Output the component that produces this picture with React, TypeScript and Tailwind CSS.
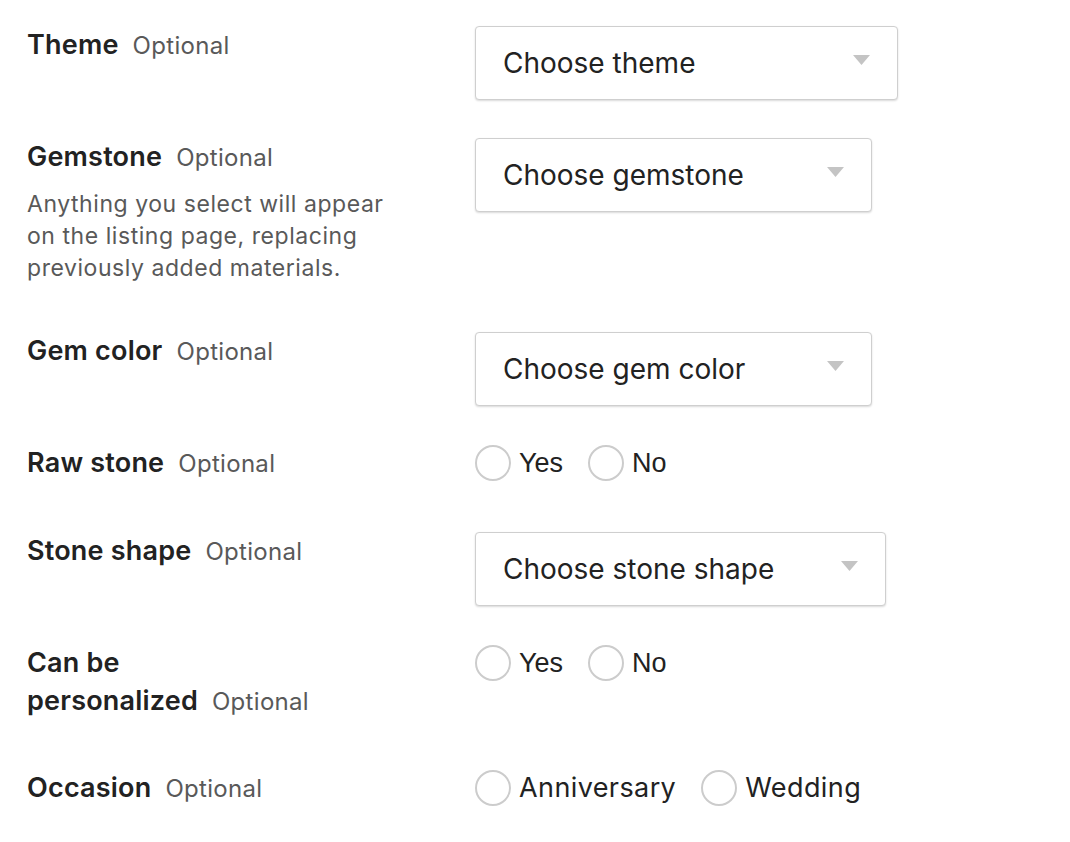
import React from "react"

function Label({ children }: { children: React.ReactNode }) {
  return (
    <div className="text-[27px] leading-[38px]">
      <span className="font-semibold tracking-[0.2px] text-[#222222]">{children}</span>
      <span className="ml-[14px] text-[24px] tracking-[0.3px] text-[#595959]">Optional</span>
    </div>
  )
}

function Select({ placeholder, width }: { placeholder: string; width: string }) {
  return (
    <div
      className={`${width} h-[74px] flex items-center justify-between pl-[27px] pr-[27px] border border-[#cfcfcf] rounded-[4px] bg-white shadow-[0_1px_2px_rgba(0,0,0,0.15)]`}
    >
      <span className="text-[28px] text-[#222222]">{placeholder}</span>
      <svg width="17" height="10" viewBox="0 0 17 10" className="-mt-[6px]">
        <path d="M0 0h17L8.5 10z" fill="#c4c4c4" />
      </svg>
    </div>
  )
}

function Radio({ label, arial }: { label: string; arial?: boolean }) {
  return (
    <label className="flex items-center gap-[8px]">
      <span className="w-[36px] h-[36px] rounded-full border-2 border-[#cccccc] bg-white" />
      <span
        className={`text-[27px] text-[#222222] ${arial ? "font-['Liberation_Sans',sans-serif]" : "tracking-[0.4px]"}`}
      >
        {label}
      </span>
    </label>
  )
}

function Radios({ children }: { children: React.ReactNode }) {
  return <div className="flex items-center gap-[25px] h-[38px] mb-[12px]">{children}</div>
}

function Row({ label, desc, children }: { label: React.ReactNode; desc?: React.ReactNode; children: React.ReactNode }) {
  return (
    <div className="flex items-start">
      <div className="w-[448px] pr-[60px] pb-[10px]">
        <Label>{label}</Label>
        {desc && (
          <p className="mt-[11px] w-[375px] text-[23px] leading-[32px] tracking-[0.55px] text-[#595959]">{desc}</p>
        )}
      </div>
      <div className="flex">{children}</div>
    </div>
  )
}

export default function App() {
  return (
    <div className="min-h-screen bg-white font-['Inter',sans-serif] pl-[27px] pt-[26px] flex flex-col gap-[38px]">
      <Row label="Theme">
        <Select placeholder="Choose theme" width="w-[423px]" />
      </Row>
      <Row
        label="Gemstone"
        desc="Anything you select will appear on the listing page, replacing previously added materials."
      >
        <Select placeholder="Choose gemstone" width="w-[397px]" />
      </Row>
      <Row label="Gem color">
        <Select placeholder="Choose gem color" width="w-[397px]" />
      </Row>
      <Row label="Raw stone">
        <Radios>
          <Radio label="Yes" arial />
          <Radio label="No" arial />
        </Radios>
      </Row>
      <Row label="Stone shape">
        <Select placeholder="Choose stone shape" width="w-[411px]" />
      </Row>
      <Row
        label={
          <>
            Can be
            <br />
            personalized
          </>
        }
      >
        <Radios>
          <Radio label="Yes" arial />
          <Radio label="No" arial />
        </Radios>
      </Row>
      <Row label="Occasion">
        <Radios>
          <Radio label="Anniversary" />
          <Radio label="Wedding" />
        </Radios>
      </Row>
    </div>
  )
}
